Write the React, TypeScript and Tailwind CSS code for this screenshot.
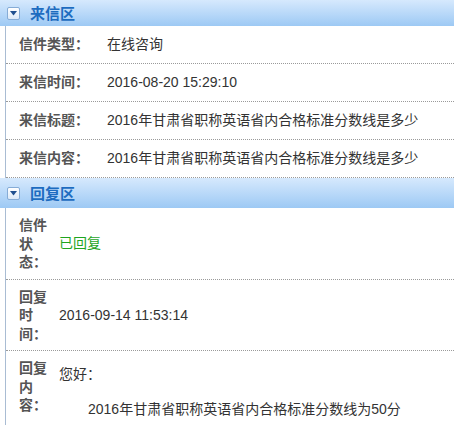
import React from "react";

const font = { fontFamily: '"Liberation Sans", "Noto Sans CJK SC", sans-serif' };

function SectionHeader({ title, tall = true }: { title: string; tall?: boolean }) {
  return (
    <div
      className={`flex items-center bg-gradient-to-b from-[#d6e9fd] to-[#9dc9f4] pl-[7px] ${
        tall ? "h-[30px]" : "h-[26px]"
      }`}
    >
      <span className="flex h-[13px] w-[13px] items-center justify-center rounded-[2px] border border-[#86acd6] bg-gradient-to-b from-white to-[#dbe9f8]">
        <svg width="7" height="5" viewBox="0 0 7 5" aria-hidden>
          <path d="M0 0 H7 L3.5 4.5 Z" fill="#1f4f8f" />
        </svg>
      </span>
      <span className="ml-[10px] text-[15px] font-semibold leading-none text-[#1d6cc0]">{title}</span>
    </div>
  );
}

function Row({ label, value }: { label: string; value: React.ReactNode }) {
  return (
    <div className="flex h-[38px] items-center border-b border-dotted border-[#9a9a9a] pl-[13px]">
      <span className="w-[88px] shrink-0 text-[14px] font-bold text-[#555]">{label}</span>
      <span className="text-[14px] text-[#333]">{value}</span>
    </div>
  );
}

function StackRow({
  label,
  children,
  last = false,
  align = "center",
}: {
  label: string[];
  children: React.ReactNode;
  last?: boolean;
  align?: "center" | "start";
}) {
  return (
    <div
      className={`flex pl-[13px] pt-[8px] ${last ? "pb-[20px]" : "border-b border-dotted border-[#9a9a9a] pb-[7px]"} ${
        align === "center" ? "items-center" : "items-start"
      }`}
    >
      <div className="flex w-[28px] shrink-0 flex-col text-[14px] font-bold leading-[18.5px] text-[#555]">
        {label.map((l) => (
          <span key={l}>{l}</span>
        ))}
      </div>
      <div className="ml-[12px] flex-1 text-[14px] text-[#333]">{children}</div>
    </div>
  );
}

export default function App() {
  return (
    <div className="h-[425px] w-[454px] overflow-hidden bg-white" style={font}>
      <SectionHeader title="来信区" tall={false} />
      <div className="ml-[5px] border-l border-[#a9bcd3]">
        <Row label="信件类型：" value="在线咨询" />
        <Row label="来信时间：" value="2016-08-20 15:29:10" />
        <Row label="来信标题：" value="2016年甘肃省职称英语省内合格标准分数线是多少" />
        <Row label="来信内容：" value="2016年甘肃省职称英语省内合格标准分数线是多少" />
      </div>
      <SectionHeader title="回复区" />
      <div className="ml-[5px] border-l border-[#a9bcd3]">
        <StackRow label={["信件", "状", "态："]}>
          <span className="text-[#1fa51f]">已回复</span>
        </StackRow>
        <StackRow label={["回复", "时", "间："]}>2016-09-14 11:53:14</StackRow>
        <StackRow label={["回复", "内", "容："]} align="start" last>
          <div className="flex flex-col pt-[6px]">
            <span className="leading-[18px]">您好：</span>
            <span className="mt-[17px] pl-[29px] leading-[18px]">2016年甘肃省职称英语省内合格标准分数线为50分</span>
          </div>
        </StackRow>
      </div>
    </div>
  );
}
